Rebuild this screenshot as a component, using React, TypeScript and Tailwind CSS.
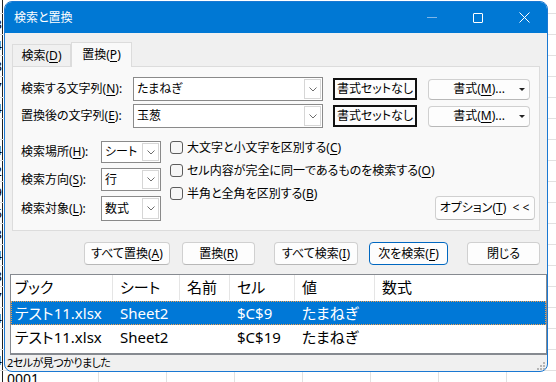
import React from 'react';

const ROWS = [
  '13', '24', '38', '47', '54', '61', '74', '82', '89', '96', '103', '114', '128', '137', '144', '151', '164', '0001',
];

function Chevron() {
  return (
    <svg width="8" height="5" viewBox="0 0 8 5">
      <path d="M0.5 0.5 L4 4 L7.5 0.5" fill="none" stroke="#6d6d6d" strokeWidth="1" />
    </svg>
  );
}

function Combo({ value, className }: { value: string; className: string }) {
  return (
    <div className={`flex items-stretch bg-white border border-[#8a8a8a] ${className}`}>
      <div className="flex-1 flex items-center pl-[3px] text-[12px] text-black">{value}</div>
      <div className="w-[17px] my-px mr-px flex items-center justify-center border border-[#d6d6d6] bg-white">
        <Chevron />
      </div>
    </div>
  );
}

function Check({ children }: { children: React.ReactNode }) {
  return (
    <div className="flex items-center h-[23px] whitespace-nowrap">
      <div className="w-[13px] h-[13px] shrink-0 rounded-[3px] border border-[#5c5c5c] bg-[#f6f6f6]" />
      <span className="ml-[4px] text-[12px] text-black">{children}</span>
    </div>
  );
}

function Btn({ children, className }: { children: React.ReactNode; className: string }) {
  return (
    <div
      className={`flex items-center justify-center whitespace-nowrap rounded-[4px] bg-[#fdfdfd] border border-[#d0d0d0] border-b-[#b8b8b8] text-[12px] text-black ${className}`}
    >
      {children}
    </div>
  );
}

function DropArrow() {
  return (
    <svg className="absolute right-[4px] top-[8px]" width="6" height="3" viewBox="0 0 6 3">
      <path d="M0 0 L6 0 L3 3 Z" fill="#222" />
    </svg>
  );
}

function Sheet() {
  return (
    <div className="flex flex-col">
      <div className="flex h-[14px] border-b border-[#e1e1e1]">
        <div className="w-[3px] border-r border-[#222]" />
      </div>
      {ROWS.map((n, i) => (
        <div key={i} className="flex h-[21px] border-b border-[#e1e1e1]">
          <div className="w-[3px] shrink-0 flex justify-end overflow-hidden border-r border-[#222] text-[13px] leading-[20px] text-black">
            <span className="shrink-0">{i === ROWS.length - 1 ? '1' : n}</span>
          </div>
          <div className="w-[96px] shrink-0 border-r border-[#e1e1e1] pl-[4px] text-[14px] leading-[16px] text-black">
            {i === ROWS.length - 1 ? '0001' : ''}
          </div>
          {[0, 1, 2, 3, 4, 5, 6].map((c) => (
            <div key={c} className="w-[68px] shrink-0 border-r border-[#e1e1e1]" />
          ))}
        </div>
      ))}
    </div>
  );
}

export default function App() {
  return (
    <div className="relative w-[556px] h-[382px] overflow-hidden bg-white font-['Noto_Sans','Noto_Sans_CJK_JP',sans-serif] [font-feature-settings:'palt']">
      <Sheet />

      {/* Dialog window */}
      <div className="absolute left-[4px] top-[1px] w-[544px] h-[371px] flex flex-col rounded-[8px] border border-[#1a78d2] overflow-hidden bg-[#f0f0f0]">
        {/* Title bar */}
        <div className="h-[31px] shrink-0 flex items-center bg-[#0078d4]">
          <span className="pl-[9px] text-[12px] text-white">検索と置換</span>
          <div className="ml-auto flex h-full">
            <div className="w-[46px] flex items-center justify-center">
              <div className="w-[10px] h-px bg-[#7fb6e8]" />
            </div>
            <div className="w-[46px] flex items-center justify-center">
              <div className="w-[10px] h-[10px] border border-white rounded-[1px]" />
            </div>
            <div className="w-[46px] flex items-center justify-center">
              <svg width="11" height="11" viewBox="0 0 11 11">
                <path d="M0.5 0.5 L10.5 10.5 M10.5 0.5 L0.5 10.5" stroke="white" strokeWidth="1" />
              </svg>
            </div>
          </div>
        </div>

        {/* Upper body */}
        <div className="px-[7px] pt-[9px]">
          {/* Tabs */}
          <div className="flex items-end h-[24px]">
            <div className="w-[59px] h-[22px] flex items-center justify-center border border-b-0 border-[#dcdcdc] bg-[#f0f0f0] text-[12px] text-black">
              検索(<span className="underline underline-offset-2">D</span>)
            </div>
            <div className="relative z-10 -mb-px w-[61px] h-[25px] flex items-center justify-center border border-b-0 border-[#dcdcdc] bg-[#f9f9f9] text-[12px] text-black">
              置換(<span className="underline underline-offset-2">P</span>)
            </div>
          </div>

          {/* Panel */}
          <div className="h-[165px] border border-[#dcdcdc] bg-[#f9f9f9] pl-[8px] pt-[10px]">
            <div className="flex items-center h-[24px]">
              <div className="w-[112px] text-[12px] text-black">
                検索する文字列(<span className="underline underline-offset-2">N</span>):
              </div>
              <Combo value="たまねぎ" className="w-[190px] h-[24px]" />
              <div className="ml-[10px] w-[84px] h-[22px] flex items-center justify-center border-2 border-[#111] bg-[#fdfdfd] text-[12px] text-black">
                書式セットなし
              </div>
              <Btn className="relative ml-[11px] w-[102px] h-[21px]">
                書式(<span className="underline underline-offset-2">M</span>)...
                <DropArrow />
              </Btn>
            </div>
            <div className="flex items-center h-[24px] mt-[3px]">
              <div className="w-[112px] text-[12px] text-black">
                置換後の文字列(<span className="underline underline-offset-2">E</span>):
              </div>
              <Combo value="玉葱" className="w-[190px] h-[24px]" />
              <div className="ml-[10px] w-[84px] h-[22px] flex items-center justify-center border-2 border-[#111] bg-[#fdfdfd] text-[12px] text-black">
                書式セットなし
              </div>
              <Btn className="relative ml-[11px] w-[102px] h-[21px]">
                書式(<span className="underline underline-offset-2">M</span>)...
                <DropArrow />
              </Btn>
            </div>

            <div className="flex mt-[13px]">
              <div className="flex flex-col gap-[5px] shrink-0">
                <div className="flex items-center">
                  <div className="w-[80px] text-[12px] text-black">
                    検索場所(<span className="underline underline-offset-2">H</span>):
                  </div>
                  <Combo value="シート" className="w-[60px] h-[22px]" />
                </div>
                <div className="flex items-center">
                  <div className="w-[80px] text-[12px] text-black">
                    検索方向(<span className="underline underline-offset-2">S</span>):
                  </div>
                  <Combo value="行" className="w-[60px] h-[23px]" />
                </div>
                <div className="flex items-center">
                  <div className="w-[80px] text-[12px] text-black">
                    検索対象(<span className="underline underline-offset-2">L</span>):
                  </div>
                  <Combo value="数式" className="w-[60px] h-[25px]" />
                </div>
              </div>
              <div className="ml-[9px] -mt-[5px] flex flex-col shrink-0">
                <Check>
                  大文字と小文字を区別する(<span className="underline underline-offset-2">C</span>)
                </Check>
                <Check>
                  セル内容が完全に同一であるものを検索する(<span className="underline underline-offset-2">O</span>)
                </Check>
                <Check>
                  半角と全角を区別する(<span className="underline underline-offset-2">B</span>)
                </Check>
              </div>
              <Btn className="ml-auto mr-[8px] self-end mb-[1px] w-[100px] h-[24px] shrink-0">
                オプション(<span className="underline underline-offset-2">T</span>)&nbsp;&nbsp;&lt;&nbsp;&lt;
              </Btn>
            </div>
          </div>

          {/* Action buttons */}
          <div className="flex justify-end mt-[11px] h-[23px]">
            <Btn className="w-[86px]">
              すべて置換(<span className="underline underline-offset-2">A</span>)
            </Btn>
            <Btn className="ml-[12px] w-[73px]">
              置換(<span className="underline underline-offset-2">R</span>)
            </Btn>
            <Btn className="ml-[19px] w-[84px]">
              すべて検索(<span className="underline underline-offset-2">I</span>)
            </Btn>
            <Btn className="ml-[11px] w-[79px] !border-[#0067c0]">
              次を検索(<span className="underline underline-offset-2">F</span>)
            </Btn>
            <Btn className="ml-[19px] w-[73px]">閉じる</Btn>
          </div>
        </div>

        {/* Results list */}
        <div className="ml-[5px] mt-[9px] h-[81px] shrink-0 flex flex-col border border-b-2 border-[#868a90] bg-white text-[15px] text-black">
          <div className="flex h-[25px] shrink-0">
            <div className="w-[102px] pl-[4px] flex items-center border-r border-[#e5e5e5]">ブック</div>
            <div className="w-[67px] pl-[7px] flex items-center border-r border-[#e5e5e5]">シート</div>
            <div className="w-[50px] pl-[7px] flex items-center border-r border-[#e5e5e5]">名前</div>
            <div className="w-[65px] pl-[7px] flex items-center border-r border-[#e5e5e5]">セル</div>
            <div className="w-[80px] pl-[7px] flex items-center border-r border-[#e5e5e5]">値</div>
            <div className="flex-1 pl-[7px] flex items-center">数式</div>
          </div>
          <div className="flex h-[24px] mt-[1px] shrink-0 bg-[#0078d7] text-white outline-1 outline-dotted outline-[#f0a050] -outline-offset-1">
            <div className="w-[102px] pl-[4px] flex items-center">テスト11.xlsx</div>
            <div className="w-[67px] pl-[7px] flex items-center">Sheet2</div>
            <div className="w-[50px] pl-[7px] flex items-center" />
            <div className="w-[65px] pl-[7px] flex items-center">$C$9</div>
            <div className="w-[80px] pl-[7px] flex items-center">たまねぎ</div>
            <div className="flex-1" />
          </div>
          <div className="flex h-[24px] shrink-0">
            <div className="w-[102px] pl-[4px] flex items-center">テスト11.xlsx</div>
            <div className="w-[67px] pl-[7px] flex items-center">Sheet2</div>
            <div className="w-[50px] pl-[7px] flex items-center" />
            <div className="w-[65px] pl-[7px] flex items-center">$C$19</div>
            <div className="w-[80px] pl-[7px] flex items-center">たまねぎ</div>
            <div className="flex-1" />
          </div>
        </div>

        {/* Status bar */}
        <div className="relative flex-1 flex items-center pl-[2px] text-[11px] tracking-[-0.5px] text-black">
          2セルが見つかりました
          <svg className="absolute right-[2px] bottom-[2px]" width="8" height="8" viewBox="0 0 8 8">
            <rect x="6" y="0" width="2" height="2" fill="#b5b5b5" />
            <rect x="3" y="3" width="2" height="2" fill="#b5b5b5" />
            <rect x="6" y="3" width="2" height="2" fill="#b5b5b5" />
            <rect x="0" y="6" width="2" height="2" fill="#b5b5b5" />
            <rect x="3" y="6" width="2" height="2" fill="#b5b5b5" />
            <rect x="6" y="6" width="2" height="2" fill="#b5b5b5" />
          </svg>
        </div>
      </div>
    </div>
  );
}
